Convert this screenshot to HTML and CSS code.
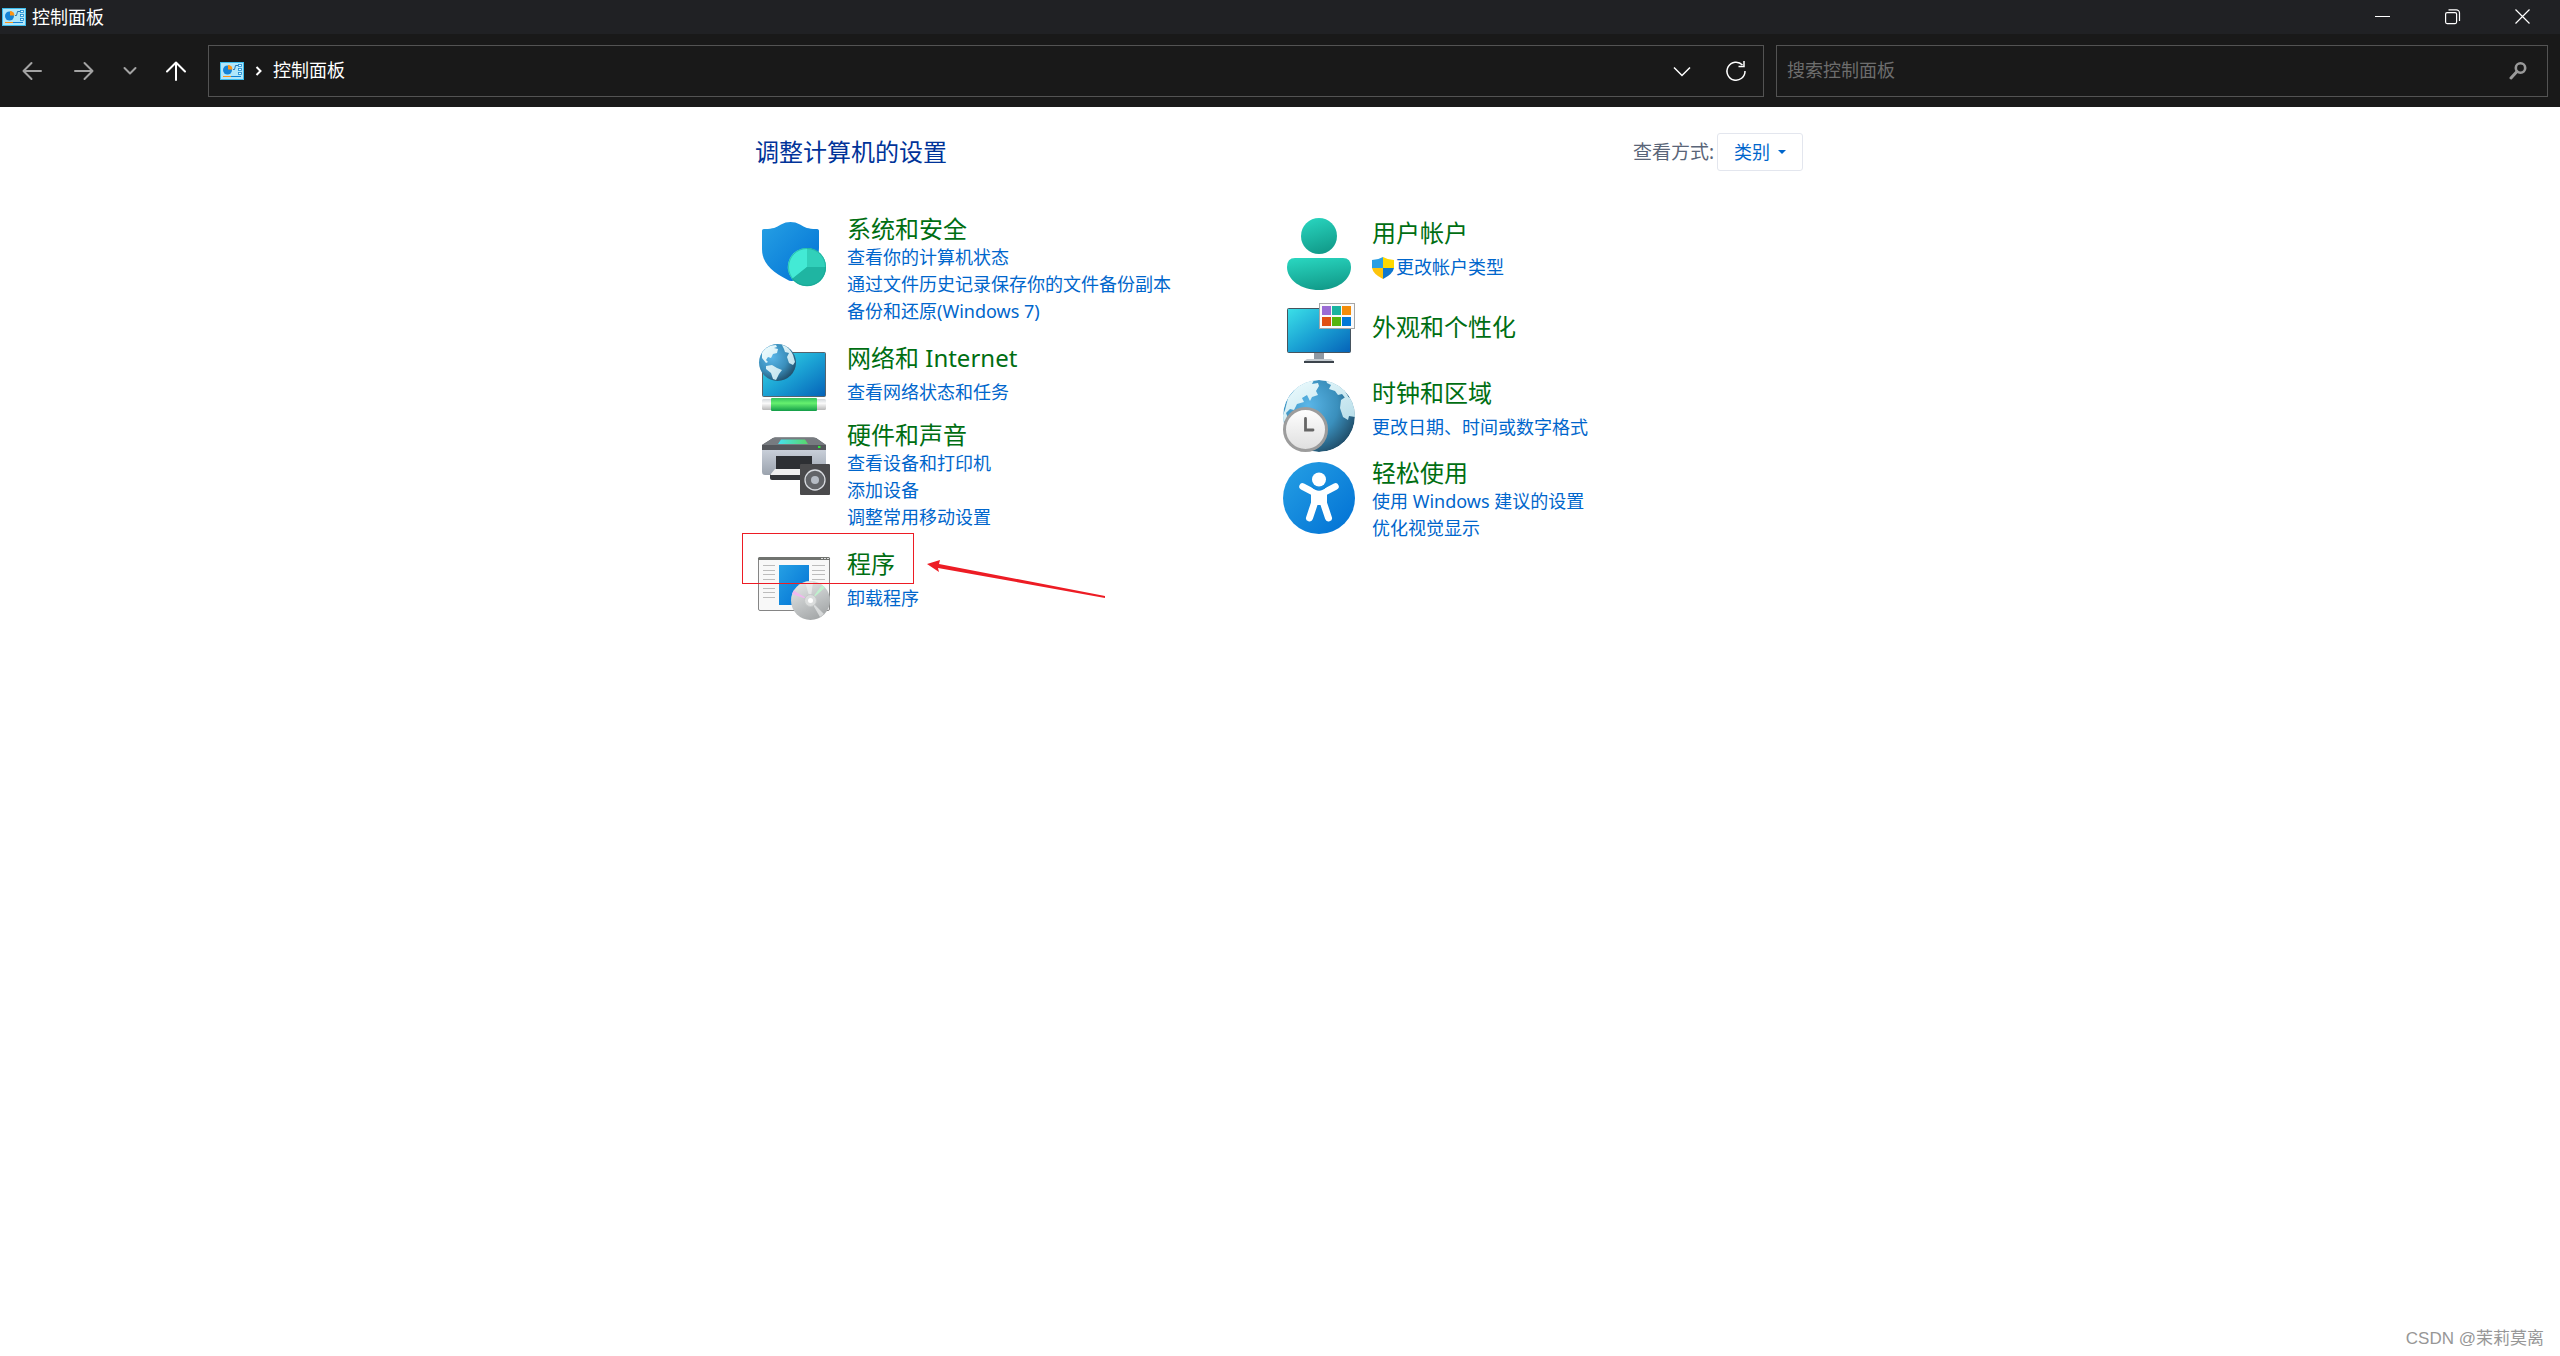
FILE: index.html
```
<!DOCTYPE html>
<html lang="zh-CN">
<head>
  <meta charset="UTF-8">
  <title>控制面板</title>
  <link rel="stylesheet" href="styles.css">
</head>
<body>
  <!-- shared gradients and symbols -->
  <svg class="defs" width="0" height="0" aria-hidden="true">
    <defs>
      <linearGradient id="blue" x1="0" y1="0" x2="1" y2="1">
        <stop offset="0" stop-color="#26a0e4"/><stop offset="1" stop-color="#0070d4"/>
      </linearGradient>
      <linearGradient id="screen" x1="0" y1="0" x2="1" y2="1">
        <stop offset="0" stop-color="#3be0e8"/><stop offset="0.5" stop-color="#1ba2d4"/><stop offset="1" stop-color="#0562b8"/>
      </linearGradient>
      <linearGradient id="teal" x1="0.3" y1="0" x2="0.6" y2="1">
        <stop offset="0" stop-color="#28d3bd"/><stop offset="1" stop-color="#119a89"/>
      </linearGradient>
      <radialGradient id="earth" cx="0.35" cy="0.35" r="0.75">
        <stop offset="0" stop-color="#5ab6e8"/><stop offset="0.55" stop-color="#3a8fbc"/><stop offset="1" stop-color="#1d4660"/>
      </radialGradient>
      <linearGradient id="land" x1="0" y1="0" x2="1" y2="1">
        <stop offset="0" stop-color="#f0fdff"/><stop offset="1" stop-color="#b5dce8"/>
      </linearGradient>
      <linearGradient id="green" x1="0" y1="0" x2="0" y2="1">
        <stop offset="0" stop-color="#35c25c"/><stop offset="0.4" stop-color="#66f06f"/><stop offset="1" stop-color="#129c48"/>
      </linearGradient>
      <linearGradient id="plastic" x1="0" y1="0" x2="0" y2="1">
        <stop offset="0" stop-color="#d5d9dd"/><stop offset="0.4" stop-color="#fafafa"/><stop offset="1" stop-color="#b8b8b8"/>
      </linearGradient>
      <linearGradient id="printer" x1="0" y1="0" x2="0" y2="1">
        <stop offset="0" stop-color="#ccd2dc"/><stop offset="1" stop-color="#9ba3ae"/>
      </linearGradient>
      <linearGradient id="panel" x1="0" y1="0" x2="1" y2="0">
        <stop offset="0" stop-color="#47e0f0"/><stop offset="1" stop-color="#58d668"/>
      </linearGradient>
      <linearGradient id="disc" x1="0.2" y1="0" x2="0.7" y2="1">
        <stop offset="0" stop-color="#e6e8e8"/><stop offset="0.5" stop-color="#c3c6c7"/><stop offset="1" stop-color="#a2a5a6"/>
      </linearGradient>
      <linearGradient id="dial" x1="0" y1="0" x2="0" y2="1">
        <stop offset="0" stop-color="#ffffff"/><stop offset="1" stop-color="#dedede"/>
      </linearGradient>
      <clipPath id="globe-clip"><circle cx="36" cy="38" r="36"/></clipPath>
    </defs>
    <symbol id="cpl" viewBox="0 0 24 18">
      <rect width="24" height="18" fill="#3cbcee"/>
      <rect x="1" y="1" width="22" height="16" fill="#b0e6fa"/>
      <circle cx="7.500" cy="8" r="4.500" fill="#1583d6"/>
      <path d="M8 7.500V3a4.500 4.500 0 0 1 4.500 4.500z" fill="#ff9414"/>
      <path d="M13 7.500h1.500l1-4H18" fill="none" stroke="#1567a8" stroke-width="0.900"/>
      <g fill="#e8faff" stroke="#1788d0" stroke-width="0.800">
        <rect x="18.500" y="2.500" width="3" height="2"/><rect x="18.500" y="6.500" width="3" height="2"/><rect x="18.500" y="10.500" width="3" height="2"/>
      </g>
      <path d="M3 14.500h8" stroke="#ff9414" stroke-width="1"/><path d="M11 14.500h10" stroke="#1080d4" stroke-width="1"/>
    </symbol>
  </svg>

  <header class="titlebar">
    <svg class="cpl-icon" width="24" height="18"><use href="#cpl"/></svg>
    <span class="window-title">控制面板</span>
    <div class="caption-buttons">
      <button class="caption-button" aria-label="最小化">
        <svg width="16" height="16"><path d="M0 7.500h15" stroke="#fff"/></svg>
      </button>
      <button class="caption-button" aria-label="还原">
        <svg width="16" height="16" fill="none" stroke="#fff" stroke-width="1.200"><rect x="0.600" y="3.600" width="11" height="11" rx="1.500"/><path d="M3.500 0.800H11a3.200 3.200 0 0 1 3.500 3.200v8"/></svg>
      </button>
      <button class="caption-button" aria-label="关闭">
        <svg width="16" height="16"><path d="M0.500 0.500l14 14M14.500 0.500l-14 14" stroke="#fff" stroke-width="1.200"/></svg>
      </button>
    </div>
  </header>

  <nav class="toolbar">
    <div class="nav-buttons">
      <button class="nav-button dim" aria-label="后退">
        <svg width="20" height="20"><path d="M19 10H1.500M9.500 2L1.500 10l8 8"/></svg>
      </button>
      <button class="nav-button dim" aria-label="前进">
        <svg width="20" height="20"><path d="M1 10h17.500M10.500 2l8 8-8 8"/></svg>
      </button>
      <button class="nav-button small dim" aria-label="最近浏览的位置">
        <svg width="14" height="20"><path d="M1.500 7l5.500 5.500L12.500 7"/></svg>
      </button>
      <button class="nav-button" aria-label="上移">
        <svg width="20" height="20"><path d="M10 19V1.500M1 10.500l9-9 9 9"/></svg>
      </button>
    </div>
    <div class="address-bar">
      <svg class="cpl-icon" width="24" height="18"><use href="#cpl"/></svg>
      <svg class="crumb-arrow" width="7" height="10"><path d="M1.500 1l4 4-4 4"/></svg>
      <a href="#" class="crumb">控制面板</a>
      <button class="address-button" aria-label="以前的位置">
        <svg width="18" height="20"><path d="M1 6.500l8 8 8-8"/></svg>
      </button>
      <button class="address-button" aria-label="刷新">
        <svg width="22" height="22"><path d="M17.500 5A9 9 0 1 0 20 11M19 1v5.500h-5.500"/></svg>
      </button>
    </div>
    <form class="search-box">
      <input type="search" class="search-input" placeholder="搜索控制面板" aria-label="搜索控制面板">
      <button type="button" class="search-button" aria-label="搜索">
        <svg width="18" height="18"><circle cx="11.500" cy="6" r="4.700" fill="none" stroke="#999" stroke-width="2.600"/><path d="M8 9.500L2 16" stroke="#999" stroke-width="3" stroke-linecap="round"/></svg>
      </button>
    </form>
  </nav>

  <main class="content">
    <div class="content-header">
      <h1 class="page-title">调整计算机的设置</h1>
      <div class="view-by">
        <label for="view" class="view-label">查看方式:</label>
        <div class="select-wrap">
          <select id="view" class="view-select">
            <option>类别</option>
          </select>
          <svg class="select-arrow" width="8" height="4"><path d="M0 0h8L4 4z" fill="#0066cc"/></svg>
        </div>
      </div>
    </div>

    <div class="categories">
      <div class="column">
        <section class="category tall">
          <svg class="category-icon" viewBox="0 0 72 72">
            <path d="M4 13c0-1.500 1-2 3-2 8 0 11-1.500 16-4.500 6-3.300 13-3.300 19 0 5 3 8 4.500 16 4.500 2 0 3 .5 3 2v17c0 15-10 24-23 31.500-3 2-6 2-9 0C15 54 4 46 4 31z" fill="url(#blue)"/>
            <circle cx="49" cy="49" r="19" fill="#26c3ae"/>
            <path d="M49 49V30A19 19 0 0 0 34 61z" fill="#43ead5"/>
            <path d="M49 49H68A19 19 0 0 1 34 61z" fill="#1fb5a2"/>
            <path d="M49 49V30A19 19 0 0 1 68 49z" fill="#31d0ba"/>
            <circle cx="49" cy="49" r="18.500" fill="none" stroke="#179c8c" stroke-opacity="0.500"/>
          </svg>
          <div class="category-text">
            <h2 class="category-title"><a href="#">系统和安全</a></h2>
            <a href="#" class="task">查看你的计算机状态</a>
            <a href="#" class="task">通过文件历史记录保存你的文件备份副本</a>
            <a href="#" class="task">备份和还原(Windows 7)</a>
          </div>
        </section>

        <section class="category">
          <svg class="category-icon" viewBox="0 0 72 72">
            <rect x="4.500" y="9.500" width="63" height="44" rx="1" fill="url(#screen)" stroke="#56636c"/>
            <rect x="4" y="56" width="64" height="11" rx="1.500" fill="url(#plastic)"/>
            <rect x="13" y="55" width="46" height="13" rx="1" fill="url(#green)"/>
            <circle cx="19.500" cy="19.500" r="18.500" fill="url(#earth)"/>
            <path d="M4 10c3-5 8-8 14-8l1 2-3 1 4 1-1 4-4 1-2 4-3-1-2 3 2 2-2 1-4-5zM8 23l6-1 5 3 5 2-3 4-3 6-3-1-2-6-5-4zM24 2c5 1 9 5 11 10l2 7-2 3-4-2-2-6 2-4-4-1-1-3z" fill="url(#land)"/>
          </svg>
          <div class="category-text">
            <h2 class="category-title"><a href="#">网络和 Internet</a></h2>
            <a href="#" class="task">查看网络状态和任务</a>
          </div>
        </section>

        <section class="category tall">
          <svg class="category-icon" viewBox="0 0 72 72">
            <path d="M4 24h64v24q0 3-3 3H7q-3 0-3-3z" fill="url(#printer)"/>
            <path d="M15 14q1-.5 2-.5h38q2 0 3 .5l10 7v5H4v-5z" fill="#54575c"/>
            <path d="M4 21L15 14q1-.5 2-.5h38q2 0 3 .5l10 7z" fill="#777b80"/>
            <path d="M23 15.500h24l3 4.500H20z" fill="url(#panel)"/>
            <rect x="60" y="22" width="2.500" height="2" fill="#32e83a"/>
            <path d="M18 32h36v14H18z" fill="#2d2f33"/>
            <path d="M12 50h46v6H14q-2 0-2-2z" fill="#34363a"/>
            <path d="M17 45h38l4 6H12z" fill="#efefef"/>
            <rect x="42" y="40" width="30" height="31" rx="1" fill="#4a4a4c"/>
            <circle cx="57" cy="56" r="10" fill="#626468" stroke="#d8dbe0" stroke-width="1.300"/>
            <circle cx="57" cy="56" r="4" fill="#b5bbc4"/>
          </svg>
          <div class="category-text">
            <h2 class="category-title"><a href="#">硬件和声音</a></h2>
            <a href="#" class="task">查看设备和打印机</a>
            <a href="#" class="task">添加设备</a>
            <a href="#" class="task">调整常用移动设置</a>
          </div>
        </section>

        <section class="category marked">
          <svg class="category-icon" viewBox="0 0 72 72">
            <rect x="0.500" y="8.500" width="71" height="53" rx="1.500" fill="#f8f8f8" stroke="#858585"/>
            <path d="M0 11V9.500Q0 8 1.500 8h69q1.500 0 1.500 1.500V11z" fill="#70736f"/>
            <path d="M63 9.500h2M66 9.500h2M69 9.500h2" stroke="#ddd"/>
            <path d="M5 16.500h12M5 21.500h12M5 25.500h12M5 30.500h12M5 34.500h12M5 39.500h12M5 43.500h12M5 48.500h12M54 16.500h13M54 21.500h13M54 25.500h13M54 30.500h13" stroke="#bcbcbc"/>
            <rect x="21" y="16" width="30" height="40" fill="url(#blue)"/>
            <circle cx="52.500" cy="51.500" r="19.500" fill="url(#disc)"/>
            <path d="M52.500 51.500L34 45l1.500-3.500z" fill="#f0b8ee"/>
            <path d="M52.500 51.500L64 36l3 2.500z" fill="#bff0cd"/>
            <path d="M52.500 51.500L47 33h8zM52.500 51.500L66 65l-4 3z" fill="#f4f5f5" fill-opacity="0.600"/>
            <circle cx="52.500" cy="51.500" r="6" fill="#dadcdc" stroke="#c4c7c7"/>
            <circle cx="52.500" cy="51.500" r="2.500" fill="#fff"/>
          </svg>
          <div class="category-text">
            <h2 class="category-title"><a href="#">程序</a></h2>
            <a href="#" class="task">卸载程序</a>
          </div>
          <!-- red frame and arrow over the category -->
          <div class="mark-frame"></div>
          <svg class="mark-arrow" width="180" height="40"><path d="M0 4L13 0l-1 4 166 32v2L11 8l1 4z" fill="#ed1c24"/></svg>
        </section>
      </div>

      <div class="column column-right">
        <section class="category">
          <svg class="category-icon" viewBox="0 0 72 72">
            <circle cx="36" cy="18" r="18" fill="url(#teal)"/>
            <path d="M12 40h48q8 0 8 9c0 13-14 23-32 23S4 62 4 49q0-9 8-9z" fill="url(#teal)"/>
          </svg>
          <div class="category-text">
            <h2 class="category-title"><a href="#">用户帐户</a></h2>
            <a href="#" class="task shield-task">
              <svg class="uac-shield" width="22" height="22">
                <path d="M11 0v11H0V3q6 0 11-3z" fill="#2a9fe4"/>
                <path d="M11 0v11h11V3q-6 0-11-3z" fill="#ffd800"/>
                <path d="M0 11h11v11Q1 17 0 11z" fill="#fdc40c"/>
                <path d="M22 11H11v11q10-5 11-11z" fill="#0f78d0"/>
              </svg>更改帐户类型</a>
          </div>
        </section>

        <section class="category title-only">
          <svg class="category-icon" viewBox="0 0 72 72">
            <path d="M31 55h10v8H31z" fill="#8f99a4"/>
            <path d="M24 61h24l3 2H21z" fill="#c3cad0"/>
            <rect x="21" y="63" width="30" height="2" fill="#3c444c"/>
            <rect x="4.500" y="10.500" width="63" height="44" rx="1" fill="url(#screen)" stroke="#46545e"/>
            <rect x="36.500" y="5.500" width="35" height="25" fill="#fafafa" stroke="#a6a6a6"/>
            <rect x="39" y="8" width="9" height="9" fill="#9a6bd4"/><rect x="49" y="8" width="9" height="9" fill="#19b3a0"/><rect x="59" y="8" width="9" height="9" fill="#f28c0a"/>
            <rect x="39" y="19" width="9" height="9" fill="#e04f12"/><rect x="49" y="19" width="9" height="9" fill="#55b40f"/><rect x="59" y="19" width="9" height="9" fill="#0078d7"/>
          </svg>
          <div class="category-text">
            <h2 class="category-title"><a href="#">外观和个性化</a></h2>
          </div>
        </section>

        <section class="category">
          <svg class="category-icon" viewBox="0 0 72 72">
            <g clip-path="url(#globe-clip)">
              <circle cx="36" cy="38" r="36" fill="url(#earth)"/>
              <path d="M2 32L5 20 14 9l9-5 8-2-2 4 6-1 1 3-3 5 2 4-6 2-2 4-3-6-5 3 2 4-7 2-3 6-4-1-4 4 2 5-4 4-2-5zM43 2l10 2 9 9 4 7-3 1-4-5-4 1-3-4-6-2 2-4-4-2zM58 22l6-4 6 4 4 12-2 5-6-1-1 4-5-3-3-9z" fill="url(#land)"/>
            </g>
            <circle cx="22.500" cy="51.500" r="21" fill="url(#dial)" stroke="#9c9c9c" stroke-width="3"/>
            <path d="M22.500 40.500v11.500h7.500" fill="none" stroke="#666" stroke-width="2.800" stroke-linecap="round"/>
          </svg>
          <div class="category-text">
            <h2 class="category-title"><a href="#">时钟和区域</a></h2>
            <a href="#" class="task">更改日期、时间或数字格式</a>
          </div>
        </section>

        <section class="category tall">
          <svg class="category-icon" viewBox="0 0 72 72">
            <circle cx="36" cy="36" r="36" fill="url(#blue)"/>
            <circle cx="36" cy="17.500" r="7" fill="#fff"/>
            <path d="M19.500 24.500L31 30.500h10l11.500-6" fill="none" stroke="#fff" stroke-width="6.500" stroke-linecap="round" stroke-linejoin="round"/>
            <path d="M28 29h16v14H28z" fill="#fff"/>
            <path d="M31.500 41L26.500 56M40.500 41l5 15" stroke="#fff" stroke-width="7" stroke-linecap="round"/>
            <path d="M29 24.500q7 7 14 0" fill="none" stroke="#0f85da" stroke-width="1.500"/>
          </svg>
          <div class="category-text">
            <h2 class="category-title"><a href="#">轻松使用</a></h2>
            <a href="#" class="task">使用 Windows 建议的设置</a>
            <a href="#" class="task">优化视觉显示</a>
          </div>
        </section>
      </div>
    </div>
  </main>

  <footer class="watermark">CSDN @茉莉莫离</footer>
</body>
</html>
```
FILE: styles.css
```
:root {
  --titlebar: #202124;
  --toolbar: #191919;
  --box-border: #535353;
  --title: #003399;
  --category: #006e12;
  --link: #0066cc;
}

* {
  box-sizing: border-box;
}

body {
  margin: 0;
  min-height: 100vh;
  display: flex;
  flex-direction: column;
  background: #fff;
  font-family: 'Noto Sans', 'Noto Sans CJK SC', sans-serif;
  font-size: 18px;
  line-height: 27px;
}

button, input, select {
  font: inherit;
}

button {
  display: flex;
  align-items: center;
  justify-content: center;
  padding: 0;
  border: none;
  background: none;
  cursor: pointer;
}

a {
  color: inherit;
  text-decoration: none;
}

.defs {
  position: absolute;
}

.titlebar {
  display: flex;
  align-items: center;
  height: 34px;
  padding: 0 2px;
  background: var(--titlebar);
  color: #fff;
}

.window-title {
  margin-left: 6px;
}

.caption-buttons {
  display: flex;
  margin-left: auto;
}

.caption-button {
  width: 70px;
  height: 34px;
}

.caption-button:hover {
  background: #3a3b3e;
}

.toolbar {
  display: flex;
  align-items: center;
  height: 73px;
  padding: 0 12px 0 14px;
  background: var(--toolbar);
  color: #fff;
}

.nav-buttons {
  display: flex;
  gap: 16px;
  width: 194px;
}

.nav-button {
  width: 36px;
  height: 40px;
}

.nav-button.small {
  width: 24px;
}

.nav-button svg {
  fill: none;
  stroke: #fff;
  stroke-width: 2;
  stroke-linecap: round;
  stroke-linejoin: round;
}

.nav-button.dim svg {
  stroke: #a3a3a3;
}

.address-bar {
  display: flex;
  align-items: center;
  flex: 1;
  height: 52px;
  padding: 0 0 0 11px;
  border: 1px solid var(--box-border);
}

.crumb-arrow {
  margin: 0 11px;
  fill: none;
  stroke: #fff;
  stroke-width: 2;
}

.crumb {
  margin-right: auto;
}

.address-button {
  width: 54px;
  height: 50px;
}

.address-button svg {
  fill: none;
  stroke: #fff;
  stroke-width: 1.5px;
}

.search-box {
  display: flex;
  flex: 0 1 772px;
  height: 52px;
  margin-left: 12px;
  border: 1px solid var(--box-border);
}

.search-input {
  flex: 1;
  min-width: 0;
  padding: 0 10px;
  border: none;
  outline: none;
  background: none;
  color: #fff;
}

.search-input::placeholder {
  color: #6d6d6d;
}

.search-button {
  width: 58px;
}

.content {
  flex: 1;
  width: 100%;
  max-width: 1050px;
  margin: 0 auto;
  padding-top: 26px;
}

.content-header {
  display: flex;
  align-items: center;
  justify-content: space-between;
  padding-right: 2px;
}

.page-title {
  margin: 0;
  font-size: 24px;
  font-weight: 400;
  line-height: 30px;
  color: var(--title);
}

.view-by {
  display: flex;
  align-items: center;
  gap: 3px;
}

.view-label {
  font-size: 19px;
  color: #5a6578;
}

.select-wrap {
  position: relative;
}

.view-select {
  display: block;
  width: 86px;
  height: 38px;
  padding: 0 0 0 16px;
  border: 1px solid #e3e6ee;
  border-radius: 3px;
  background: #fff;
  color: var(--link);
  appearance: none;
}

.select-arrow {
  position: absolute;
  top: 17px;
  right: 17px;
  pointer-events: none;
}

.categories {
  display: grid;
  grid-template-columns: 1fr 1fr;
  padding-top: 43px;
}

.column {
  display: flex;
  flex-direction: column;
  gap: 5px;
  padding-left: 3px;
}

.column-right {
  gap: 8px;
  padding-top: 4px;
}

.category {
  display: flex;
  align-items: flex-start;
  gap: 17px;
}

.category-icon {
  flex: none;
  width: 72px;
  height: 72px;
  overflow: visible;
}

.category-title {
  margin: 0 0 6px;
  font-size: 24px;
  font-weight: 400;
  line-height: 30px;
  color: var(--category);
}

.task {
  display: block;
  color: var(--link);
}

.category-title a:hover,
.task:hover {
  text-decoration: underline;
}

.tall {
  padding-bottom: 13px;
}

.tall .category-icon {
  margin-top: 4px;
}

.tall .category-title {
  margin: 0;
}

.title-only .category-title {
  margin-top: 14px;
}

.shield-task {
  display: flex;
  align-items: center;
  gap: 2px;
}

.marked {
  position: relative;
}

.mark-frame {
  position: absolute;
  top: -16px;
  left: -16px;
  width: 172px;
  height: 51px;
  border: 1px solid #ed1c24;
  pointer-events: none;
}

.mark-arrow {
  position: absolute;
  top: 11px;
  left: 169px;
  pointer-events: none;
}

.watermark {
  padding: 0 16px 4px;
  font-family: 'Liberation Sans', 'Noto Sans CJK SC', sans-serif;
  font-size: 17px;
  text-align: right;
  color: #979797;
}
```
